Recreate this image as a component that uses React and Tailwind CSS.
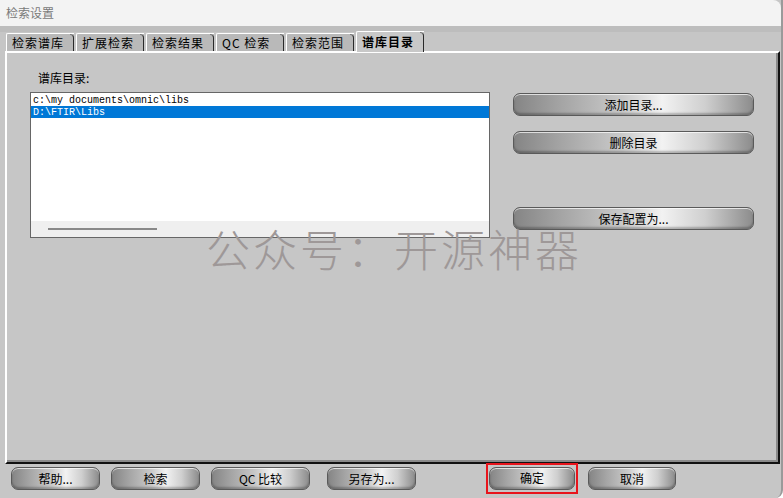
import React from 'react';

const cjk = "font-['Noto_Sans_CJK_SC','Noto_Sans',sans-serif]";

// metallic pill button
function MetalButton({ children, className = '' }) {
  return (
    <button
      type="button"
      className={`h-[23px] rounded-[7px] border border-[#5a5a5a] bg-[linear-gradient(90deg,#858585_0%,#a5a5a5_20%,#c9c9c9_45%,#f2f2f2_62%,#cfcfcf_80%,#8c8c8c_100%)] shadow-[inset_0_1px_0_rgba(255,255,255,0.7),inset_0_-2px_2px_rgba(0,0,0,0.25)] text-[12px] leading-none text-black ${cjk} flex items-center justify-center ${className}`}
    >
      {children}
    </button>
  );
}

function Tab({ label, active }) {
  return (
    <div
      className={`relative flex items-center px-[5px] border-l border-t border-white rounded-tl-[2px] ${
        active
          ? 'h-[21px] w-[68px] bg-[#c8c8c8] font-bold -mb-[1px] z-10'
          : 'h-[18px] w-[68px] bg-[#b9b9b9]'
      }`}
    >
      <span className={`text-[12px] leading-none text-black ${cjk} tracking-[1px]`}>{label}</span>
      <div className="absolute right-0 top-0 h-full w-[4px] border-r border-[#2a2a2a] rounded-tr-[4px] border-t border-t-[#777]" />
    </div>
  );
}

export default function App() {
  const tabs = ['检索谱库', '扩展检索', '检索结果', 'QC 检索', '检索范围', '谱库目录'];
  return (
    <div className="relative w-[783px] h-[498px] overflow-hidden bg-[#c6c6c6] rounded-br-[8px] border-r-2 border-[#9a9a9a]">
      {/* Title bar */}
      <div className="h-[26px] bg-[#f3f3f3] flex items-center pl-[6px] rounded-tr-[8px]">
        <span className={`text-[12px] text-[#7a7a7a] ${cjk}`}>检索设置</span>
      </div>

      {/* Tabs */}
      <div className="h-[6px] bg-[#bdbdbd]" />
      <div className="flex items-end gap-[2px] pl-[6px] h-[19px]">
        {tabs.map((t, i) => (
          <Tab key={t} label={t} active={i === tabs.length - 1} />
        ))}
      </div>

      {/* Panel */}
      <div className="ml-[5px] w-[775px] h-[413px] border-l-2 border-t-2 border-white border-r-2 border-b-2 border-r-[#111] border-b-[#111] bg-[#c6c6c6] shadow-[inset_-2px_-2px_0_#8a8a8a] flex pt-[19px]">
        <div className="flex flex-col ml-[23px]">
          <span className={`text-[12px] leading-none ml-[8px] text-black ${cjk}`}>谱库目录:</span>
          <div className="mt-[8px] w-[460px] h-[146px] bg-white border border-[#666] flex flex-col">
            <div className="h-[13px] pl-[2px] pt-[1px] flex items-center text-[10px] font-['Liberation_Mono',monospace] text-black">
              c:\my documents\omnic\libs
            </div>
            <div className="h-[12px] pl-[2px] flex items-center bg-[#0078d7] text-[10px] font-['Liberation_Mono',monospace] text-white">
              D:\FTIR\Libs
            </div>
            <div className="flex-1" />
            <div className="h-[16px] bg-[#efefef] flex items-center pl-[17px]">
              <div className="w-[109px] h-[2px] bg-[#888]" />
            </div>
          </div>
        </div>
        <div className="flex flex-col ml-[23px] pt-[21px]">
          <MetalButton className="w-[241px]">添加目录...</MetalButton>
          <MetalButton className="w-[241px] mt-[15px]">删除目录</MetalButton>
          <MetalButton className="w-[241px] mt-[53px]">保存配置为...</MetalButton>
        </div>
      </div>

      {/* Bottom buttons */}
      <div className="flex items-center h-[29px]">
        <MetalButton className="w-[89px] ml-[11px]">帮助...</MetalButton>
        <MetalButton className="w-[89px] ml-[11px]">检索</MetalButton>
        <MetalButton className="w-[99px] ml-[11px]">QC 比较</MetalButton>
        <MetalButton className="w-[89px] ml-[17px]">另存为...</MetalButton>
        <div className="ml-[70px] border-2 border-[#e8141c] p-[1px] h-[31px] -mt-[1px] flex items-center">
          <MetalButton className="w-[86px]">确定</MetalButton>
        </div>
        <MetalButton className="w-[88px] ml-[10px]">取消</MetalButton>
      </div>

      {/* Watermark */}
      <div className={`absolute left-[206px] top-[226px] text-[44px] leading-none text-[#9e9898] tracking-[3px] ${cjk} font-light`}>
        公众号：开源神器
      </div>
    </div>
  );
}
